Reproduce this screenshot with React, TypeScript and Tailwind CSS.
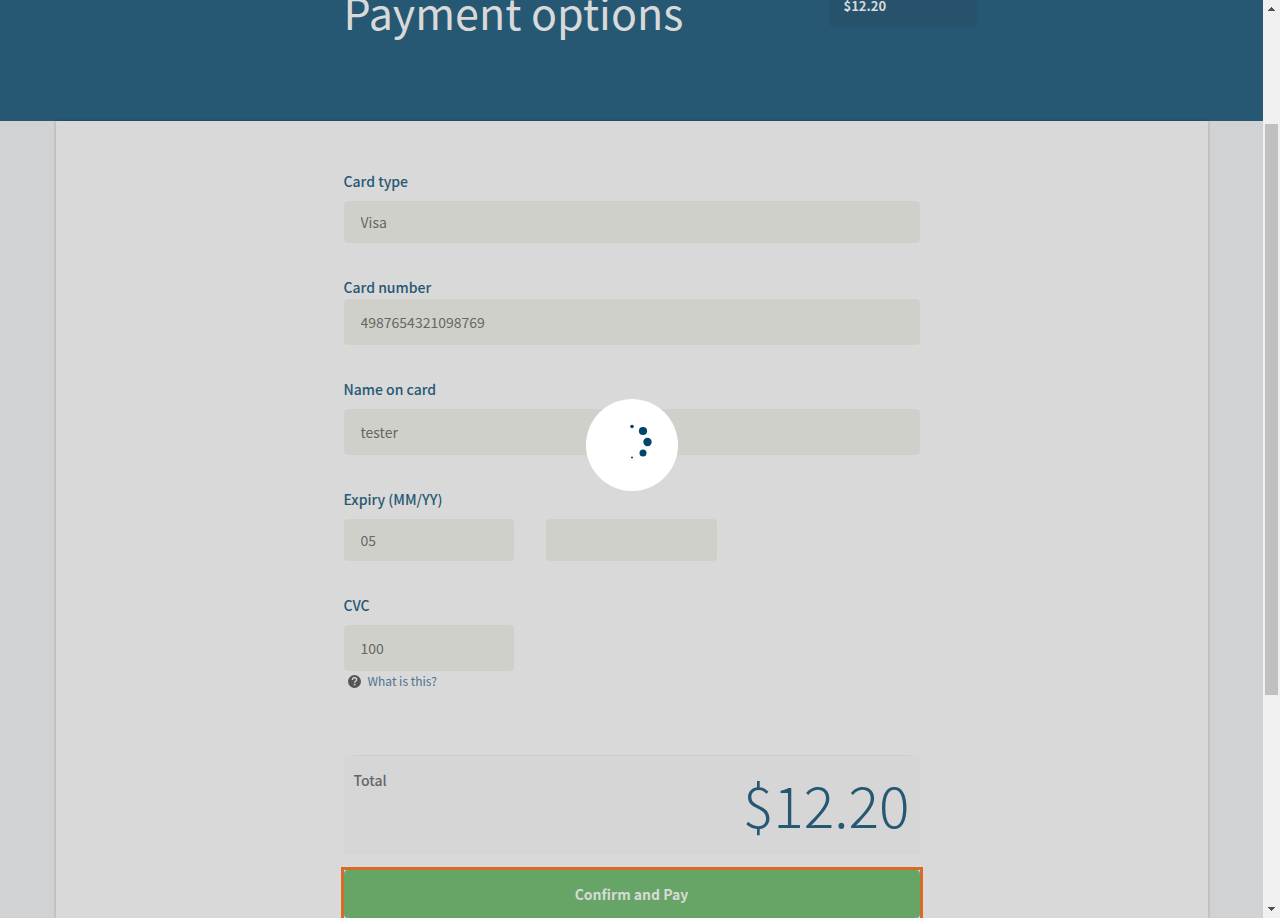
import type { ReactNode } from "react";

const LABEL = "block text-[14px] leading-5 font-medium text-[#265873]";
const FIELD =
  "block w-full appearance-none rounded border border-transparent bg-[#cfd0c9] px-4 text-[14px] leading-5 text-[#666666] outline-none";

function Field({
  id,
  label,
  tight = false,
  children,
}: {
  id: string;
  label: string;
  tight?: boolean;
  children: ReactNode;
}) {
  return (
    <div className={tight ? "flex flex-col gap-0.5" : "flex flex-col gap-2.5"}>
      <label htmlFor={id} className={LABEL}>
        {label}
      </label>
      {children}
    </div>
  );
}

function Header() {
  return (
    <header className="h-[121px] shrink-0 bg-[#265873]">
      <div className="mx-auto flex max-w-6xl items-start">
        <h1 className="ml-[25%] w-[486px] text-[43px] leading-[22px] whitespace-nowrap text-[#d9d9d9]">
          Payment options
        </h1>
        <div className="h-[26px] w-[147px] rounded-b bg-[#26536b] px-3.5 text-[13px] leading-3 font-bold text-[#d9d9d9] shadow-xs">
          $12.20
        </div>
      </div>
    </header>
  );
}

function PaymentForm() {
  return (
    <form className="mx-auto w-1/2 pt-[50px]" onSubmit={(e) => e.preventDefault()}>
      <div className="flex flex-col gap-[34px]">
        <Field id="card-type" label="Card type">
          <select id="card-type" className={`${FIELD} h-[42px]`}>
            <option>Visa</option>
          </select>
        </Field>
        <Field id="card-number" label="Card number" tight>
          <input id="card-number" defaultValue="4987654321098769" className={`${FIELD} h-[46px]`} />
        </Field>
        <Field id="card-name" label="Name on card">
          <input id="card-name" defaultValue="tester" className={`${FIELD} h-[46px]`} />
        </Field>
        <Field id="expiry-month" label="Expiry (MM/YY)">
          <div className="grid grid-cols-3 gap-8">
            <select id="expiry-month" className={`${FIELD} h-[42px]`}>
              <option>05</option>
            </select>
            <select aria-label="Expiry year" className={`${FIELD} h-[42px]`}>
              <option></option>
            </select>
          </div>
        </Field>
        <div>
          <Field id="cvc" label="CVC">
            <div className="grid grid-cols-3 gap-8">
              <input id="cvc" defaultValue="100" className={`${FIELD} h-[46px]`} />
            </div>
          </Field>
          <a href="#cvc" className="flex h-5 items-center gap-[7px] pl-1 text-[12px] leading-5 text-[#4c7391]">
            <svg viewBox="0 0 13 13" className="size-[13px]" aria-hidden="true">
              <circle cx="6.5" cy="6.5" r="6.5" fill="#555" />
              <path
                d="M4.4 4.9C4.4 3.6 5.3 2.8 6.5 2.8s2.1.8 2.1 1.9c0 1.5-2 1.5-2 3.1"
                fill="none"
                stroke="#d9d9d9"
                strokeWidth="1.4"
              />
              <rect x="5.8" y="8.8" width="1.6" height="1.5" fill="#d9d9d9" />
            </svg>
            What is this?
          </a>
        </div>
      </div>

      <div className="mt-16 mb-4 h-[99px] bg-[#d6d6d6] px-2.5">
        <div className="flex items-start justify-between border-t border-[#cecece]">
          <span className="pt-3.5 text-[14px] leading-5 font-medium text-[#666666]">Total</span>
          <span className="pt-2 text-[57px] leading-[78px] font-light text-[#265873]">$12.20</span>
        </div>
      </div>

      <button
        type="submit"
        className="block h-12 w-full bg-[#d9d9d9] text-[14px] leading-5 font-bold text-[#d9d9d9] outline-3 outline-[#d96b27]"
      >
        <span className="flex size-full items-center justify-center rounded bg-[#66a566]">
          Confirm and Pay
        </span>
      </button>
    </form>
  );
}

function Spinner() {
  return (
    <div
      role="status"
      aria-label="Processing"
      className="absolute top-[399px] left-1/2 size-[92px] -translate-x-1/2 rounded-full bg-white"
    >
      <svg viewBox="0 0 92 92" className="size-full" fill="#00456b" aria-hidden="true">
        <circle cx="46" cy="27.5" r="1.8" />
        <circle cx="57" cy="32" r="4.1" />
        <circle cx="61.5" cy="43" r="4.2" />
        <circle cx="57" cy="54" r="3.5" />
        <circle cx="46" cy="58.5" r="1" />
      </svg>
    </div>
  );
}

function ScrollRail() {
  return (
    <div className="flex w-[17px] shrink-0 flex-col bg-[#f0f0f0]" aria-hidden="true">
      <svg viewBox="0 0 17 17" className="size-[17px]" fill="#505050" shapeRendering="crispEdges">
        <path d="M8 7h1v1h1v1h1v1h1v1H5v-1h1V9h1V8h1z" />
      </svg>
      <div className="grow-[107] basis-0" />
      <div className="mx-0.5 grow-[571] basis-0 bg-[#c0c0c0]" />
      <div className="grow-[206] basis-0" />
      <svg viewBox="0 0 17 17" className="size-[17px]" fill="#505050" shapeRendering="crispEdges">
        <path d="M5 6h7v1h-1v1h-1v1H9v1H8V9H7V8H6V7H5z" />
      </svg>
    </div>
  );
}

export default function App() {
  return (
    <div className="flex h-screen overflow-hidden font-['Noto_Sans_CJK_SC','Noto_Sans',sans-serif]">
      <div className="relative flex min-w-0 flex-1 flex-col overflow-hidden bg-[#d1d2d4]">
        <Header />
        <main className="mx-auto w-full max-w-6xl grow bg-[#d9d9d9] shadow-[0_0_3px_rgba(0,0,0,0.25)]">
          <PaymentForm />
        </main>
        <Spinner />
      </div>
      <ScrollRail />
    </div>
  );
}
